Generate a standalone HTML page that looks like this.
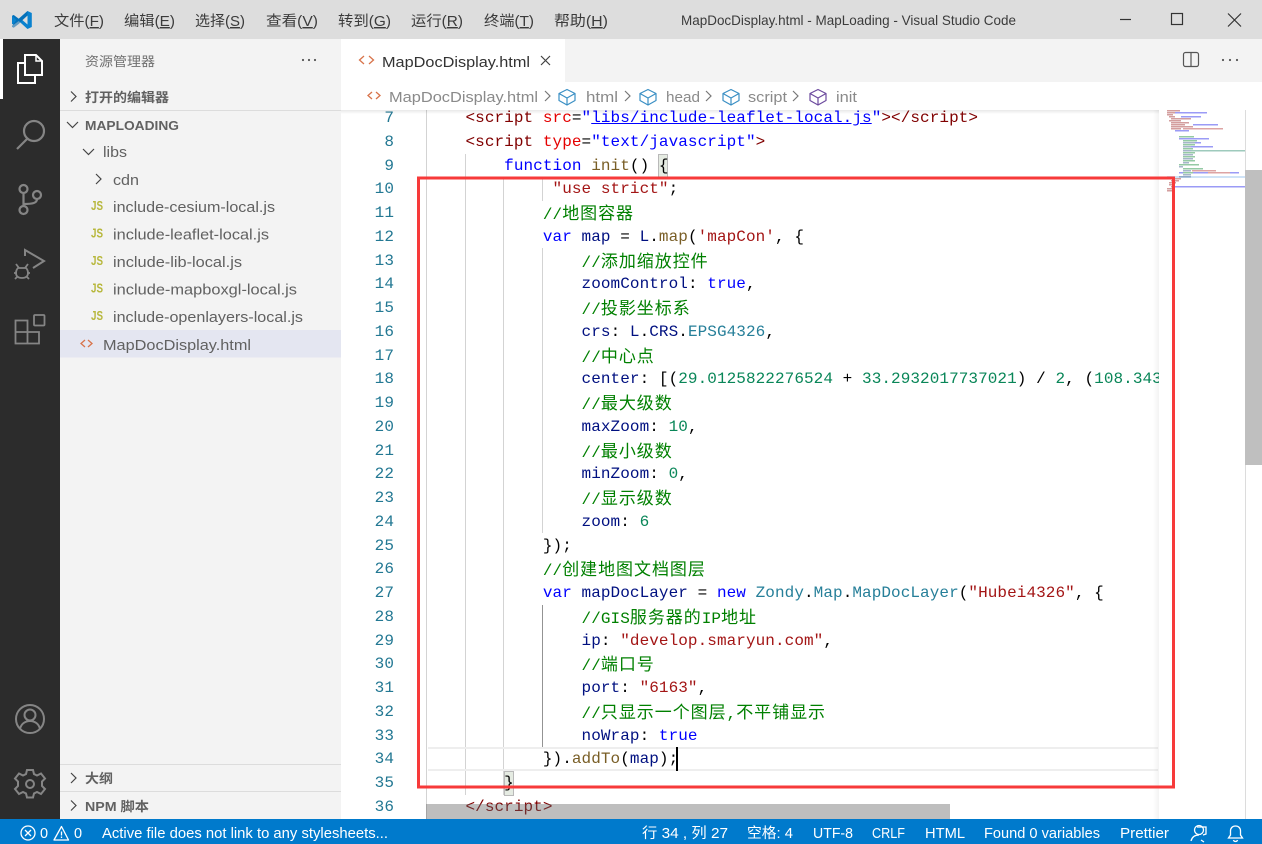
<!DOCTYPE html>
<html lang="zh">
<head>
<meta charset="utf-8">
<title>MapDocDisplay.html - MapLoading - Visual Studio Code</title>
<style>
html,body{margin:0;padding:0;width:1262px;height:844px;overflow:hidden;background:#fff}
#code,#nums{position:absolute;top:107.2px;font-family:"Liberation Mono","Noto Sans CJK SC",monospace;font-size:16px;letter-spacing:.07px;white-space:pre}
#nums{left:360px;width:34px;text-align:right;color:#237893;letter-spacing:.07px}
#code{left:426.8px;width:732px;overflow:hidden;color:#000}
#nums div,#code div{height:23.76px;line-height:23.76px}
i{font-style:normal}
.c{color:#008000}
.z{font-size:17px;letter-spacing:.95px;font-family:"Noto Sans CJK SC",sans-serif;line-height:20px}
.t{color:#800000}.a{color:#e50000}.s{color:#0000ff}.j{color:#a31515}.k{color:#0000ff}.f{color:#795e26}.v{color:#001080}.y{color:#267f99}.n{color:#098658}
.u{text-decoration:underline;color:#0000ff}
.b{position:absolute}
svg{position:absolute;left:0;top:0}
text{font-family:"Liberation Sans","Noto Sans CJK SC",sans-serif}
</style>
</head>
<body>
<!-- editor decorations -->
<div class="b" style="left:426px;top:110px;width:1px;height:709px;background:#d3d3d3"></div>
<div class="b" style="left:465px;top:154px;width:1px;height:641px;background:#d3d3d3"></div>
<div class="b" style="left:503px;top:177px;width:1px;height:618px;background:#d3d3d3"></div>
<div class="b" style="left:542px;top:177px;width:1px;height:24px;background:#d3d3d3"></div>
<div class="b" style="left:542px;top:248px;width:1px;height:285px;background:#d3d3d3"></div>
<div class="b" style="left:542px;top:605px;width:1px;height:142px;background:#939393"></div>
<div class="b" style="left:428px;top:747px;width:730px;height:20px;border-top:2px solid #eee;border-bottom:2px solid #eee"></div>
<div class="b" style="left:658px;top:154px;width:8px;height:22px;background:#e5ebe2;border:1px solid #b9b9b9"></div>
<div class="b" style="left:504px;top:771px;width:8px;height:23px;background:#e5ebe2;border:1px solid #b9b9b9"></div>

<div id="nums"><div>7</div><div>8</div><div>9</div><div>10</div><div>11</div><div>12</div><div>13</div><div>14</div><div>15</div><div>16</div><div>17</div><div>18</div><div>19</div><div>20</div><div>21</div><div>22</div><div>23</div><div>24</div><div>25</div><div>26</div><div>27</div><div>28</div><div>29</div><div>30</div><div>31</div><div>32</div><div>33</div><div>34</div><div>35</div><div>36</div></div>

<div id="code"><div>    <i class="t">&lt;script</i> <i class="a">src</i>=<i class="s">"</i><i class="u">libs/include-leaflet-local.js</i><i class="s">"</i><i class="t">&gt;&lt;/script&gt;</i></div><div>    <i class="t">&lt;script</i> <i class="a">type</i>=<i class="s">"text/javascript"</i><i class="t">&gt;</i></div><div>        <i class="k">function</i> <i class="f">init</i>() {</div><div>             <i class="j">"use strict"</i>;</div><div>            <i class="c">//<i class="z">地图容器</i></i></div><div>            <i class="k">var</i> <i class="v">map</i> = <i class="v">L</i>.<i class="f">map</i>(<i class="j">'mapCon'</i>, {</div><div>                <i class="c">//<i class="z">添加缩放控件</i></i></div><div>                <i class="v">zoomControl</i>: <i class="k">true</i>,</div><div>                <i class="c">//<i class="z">投影坐标系</i></i></div><div>                <i class="v">crs</i>: <i class="v">L</i>.<i class="v">CRS</i>.<i class="y">EPSG4326</i>,</div><div>                <i class="c">//<i class="z">中心点</i></i></div><div>                <i class="v">center</i>: [(<i class="n">29.0125822276524</i> + <i class="n">33.2932017737021</i>) / <i class="n">2</i>, (<i class="n">108.3434</i></div><div>                <i class="c">//<i class="z">最大级数</i></i></div><div>                <i class="v">maxZoom</i>: <i class="n">10</i>,</div><div>                <i class="c">//<i class="z">最小级数</i></i></div><div>                <i class="v">minZoom</i>: <i class="n">0</i>,</div><div>                <i class="c">//<i class="z">显示级数</i></i></div><div>                <i class="v">zoom</i>: <i class="n">6</i></div><div>            });</div><div>            <i class="c">//<i class="z">创建地图文档图层</i></i></div><div>            <i class="k">var</i> <i class="v">mapDocLayer</i> = <i class="k">new</i> <i class="y">Zondy</i>.<i class="y">Map</i>.<i class="y">MapDocLayer</i>(<i class="j">"Hubei4326"</i>, {</div><div>                <i class="c">//GIS<i class="z">服务器的</i>IP<i class="z">地址</i></i></div><div>                <i class="v">ip</i>: <i class="j">"develop.smaryun.com"</i>,</div><div>                <i class="c">//<i class="z">端口号</i></i></div><div>                <i class="v">port</i>: <i class="j">"6163"</i>,</div><div>                <i class="c">//<i class="z">只显示一个图层</i>,<i class="z">不平铺显示</i></i></div><div>                <i class="v">noWrap</i>: <i class="k">true</i></div><div>            }).<i class="f">addTo</i>(<i class="v">map</i>);</div><div>        }</div><div>    <i class="t">&lt;/script&gt;</i></div></div>

<div class="b" style="left:676px;top:747px;width:2px;height:24px;background:#000"></div>
<div class="b" style="left:426px;top:804px;width:524px;height:15px;background:rgba(100,100,100,.42)"></div>

<svg width="1262" height="844" viewBox="0 0 1262 844" xmlns="http://www.w3.org/2000/svg">
<defs>
<linearGradient id="sh" x1="0" x2="0" y1="0" y2="1"><stop offset="0" stop-color="#000" stop-opacity=".09"/><stop offset="1" stop-color="#000" stop-opacity="0"/></linearGradient>
<linearGradient id="sr" x1="0" x2="1" y1="0" y2="0"><stop offset="0" stop-color="#000" stop-opacity="0"/><stop offset="1" stop-color="#000" stop-opacity=".05"/></linearGradient>
<g id="cube" fill="none" stroke-width="1.2" stroke-linejoin="round"><path d="M1 5.500 9 1.500l8 4v7l-8 4.500-8-4.500z"/><path d="M1 5.500 9 10l8-4.500M9 10v7"/></g>
<path id="chev" d="M0 0l5 5-5 5" fill="none" stroke-width="1.2"/>
<path id="chevd" d="M0 0l5.500 5.500L11 0" fill="none" stroke-width="1.2"/>
</defs>

<!-- title bar -->
<rect width="1262" height="39" fill="#dddddd"/>
<path d="M27.500 11 31.800 13v14l-4.300 2-8.800-8-5 3.800-1.700-.9v-8l1.700-.9 5 3.800zM27.500 15.500l-5.200 4.500 5.200 4.500z" fill="#0a82cf" fill-rule="evenodd"/>
<path d="M12 15.800 13.700 15l5 3.800L27.500 11v4.500L18.700 24l-5 3.800-1.700-.9v-1l4.300-5.900z" fill="#0065a9" opacity=".55"/>
<g fill="#3b3b3b" font-size="14.500">
<text x="54" y="26" textLength="50" lengthAdjust="spacingAndGlyphs">文件(<tspan text-decoration="underline">F</tspan>)</text>
<text x="124" y="26" textLength="51" lengthAdjust="spacingAndGlyphs">编辑(<tspan text-decoration="underline">E</tspan>)</text>
<text x="195" y="26" textLength="50" lengthAdjust="spacingAndGlyphs">选择(<tspan text-decoration="underline">S</tspan>)</text>
<text x="266" y="26" textLength="52" lengthAdjust="spacingAndGlyphs">查看(<tspan text-decoration="underline">V</tspan>)</text>
<text x="338" y="26" textLength="53" lengthAdjust="spacingAndGlyphs">转到(<tspan text-decoration="underline">G</tspan>)</text>
<text x="411" y="26" textLength="52" lengthAdjust="spacingAndGlyphs">运行(<tspan text-decoration="underline">R</tspan>)</text>
<text x="484" y="26" textLength="50" lengthAdjust="spacingAndGlyphs">终端(<tspan text-decoration="underline">T</tspan>)</text>
<text x="554" y="26" textLength="54" lengthAdjust="spacingAndGlyphs">帮助(<tspan text-decoration="underline">H</tspan>)</text>
<text x="681" y="25" font-size="14" textLength="335" lengthAdjust="spacingAndGlyphs">MapDocDisplay.html - MapLoading - Visual Studio Code</text>
</g>
<g fill="none" stroke="#333" stroke-width="1.200">
<path d="M1120 19.500h11"/>
<rect x="1171.500" y="13.500" width="11" height="11"/>
<path d="M1228 13.500l13 13M1241 13.500l-13 13"/>
</g>

<!-- activity bar -->
<rect y="39" width="60" height="780" fill="#2c2c2c"/>
<rect y="39" width="3" height="60" fill="#fff"/>
<g fill="none" stroke="#fff" stroke-width="2">
<path d="M25 55h11l6 6v14H25z" fill="#2c2c2c"/>
<path d="M36 55v6h6" stroke-width="1.500"/>
<path d="M25 63h-7v20h17v-8"/>
</g>
<g fill="none" stroke="#858585" stroke-width="2.200">
<circle cx="34" cy="131" r="10"/><path d="M27 139l-10 10"/>
<circle cx="23.500" cy="189" r="4"/><circle cx="23.500" cy="210" r="4"/><circle cx="37" cy="195" r="4"/>
<path d="M23.500 193v13M37 199c0 4-4 5-13.500 5"/>
<path d="M25 256v-6l19 11-11 7" stroke-width="2"/>
<path d="M18 268h8c1 1 2 3 2 5 0 3-2 5-6 5s-6-2-6-5c0-2 1-4 2-5zM16 264l3 4M28 264l-3 4M14 273h3M30 273h-3M15 279l3-3M29 279l-3-3" stroke-width="1.800"/>
<path d="M15.500 320.500h12v23h-12zM15.500 332h23.500v11.500h-11.500" stroke-width="1.800"/>
<rect x="34" y="315" width="10.500" height="10.500" rx="1" stroke-width="1.800"/>
<circle cx="30" cy="719" r="14" stroke-width="2"/><circle cx="30" cy="715" r="5.500" stroke-width="2"/><path d="M20 729c1-5 5-8 10-8s9 3 10 8" stroke-width="2"/>
<circle cx="30" cy="784" r="4" stroke-width="2"/>
<path d="M27 770h6l1 4 3 1.500 4-2 4 5-3 3v4.500l3 3-4 5-4-2-3 1.500-1 4h-6l-1-4-3-1.500-4 2-4-5 3-3v-4.500l-3-3 4-5 4 2 3-1.500z" stroke-width="2"/>
</g>

<!-- sidebar -->
<rect x="60" y="39" width="281" height="780" fill="#f3f3f3"/>
<text x="85" y="66" font-size="13" fill="#6f6f6f" textLength="70" lengthAdjust="spacingAndGlyphs">资源管理器</text>
<g fill="#555"><circle cx="303" cy="60" r="1.100"/><circle cx="309" cy="60" r="1.100"/><circle cx="315" cy="60" r="1.100"/></g>
<use href="#chev" x="71" y="91.500" stroke="#444"/>
<text x="85" y="102" font-size="13" font-weight="700" fill="#616161" textLength="84" lengthAdjust="spacingAndGlyphs">打开的编辑器</text>
<rect x="60" y="110" width="281" height="1" fill="#dcdcdc"/>
<use href="#chevd" x="67" y="122" stroke="#444"/>
<text x="85" y="130" font-size="13" font-weight="700" fill="#616161" textLength="94" lengthAdjust="spacingAndGlyphs">MAPLOADING</text>
<use href="#chevd" x="83" y="149" stroke="#444"/>
<text x="103" y="157" font-size="14.500" fill="#616161" textLength="24" lengthAdjust="spacingAndGlyphs">libs</text>
<use href="#chev" x="96" y="174" stroke="#444"/>
<text x="113" y="185" font-size="14.500" fill="#616161" textLength="26" lengthAdjust="spacingAndGlyphs">cdn</text>
<g fill="#b7b73b" font-size="12.500" font-weight="700">
<text x="91" y="210" textLength="12" lengthAdjust="spacingAndGlyphs">JS</text>
<text x="91" y="237.500" textLength="12" lengthAdjust="spacingAndGlyphs">JS</text>
<text x="91" y="265" textLength="12" lengthAdjust="spacingAndGlyphs">JS</text>
<text x="91" y="292.500" textLength="12" lengthAdjust="spacingAndGlyphs">JS</text>
<text x="91" y="320" textLength="12" lengthAdjust="spacingAndGlyphs">JS</text>
</g>
<g font-size="14.500" fill="#616161">
<text x="113" y="212" textLength="162" lengthAdjust="spacingAndGlyphs">include-cesium-local.js</text>
<text x="113" y="239.500" textLength="156" lengthAdjust="spacingAndGlyphs">include-leaflet-local.js</text>
<text x="113" y="267" textLength="129" lengthAdjust="spacingAndGlyphs">include-lib-local.js</text>
<text x="113" y="294.500" textLength="184" lengthAdjust="spacingAndGlyphs">include-mapboxgl-local.js</text>
<text x="113" y="322" textLength="190" lengthAdjust="spacingAndGlyphs">include-openlayers-local.js</text>
</g>
<rect x="60" y="330" width="281" height="27.500" fill="#e4e6f1"/>
<path d="M85 340l-4 3.500 4 3.500M88 340l4 3.500-4 3.500" fill="none" stroke="#d8734a" stroke-width="1.300"/>
<text x="103" y="350" font-size="14.500" fill="#616161" textLength="148" lengthAdjust="spacingAndGlyphs">MapDocDisplay.html</text>
<rect x="60" y="764" width="281" height="1" fill="#dcdcdc"/>
<use href="#chev" x="71" y="773" stroke="#444"/>
<text x="85" y="783" font-size="13" font-weight="700" fill="#616161" textLength="28" lengthAdjust="spacingAndGlyphs">大纲</text>
<rect x="60" y="791" width="281" height="1" fill="#dcdcdc"/>
<use href="#chev" x="71" y="800.500" stroke="#444"/>
<text x="85" y="811" font-size="13" font-weight="700" fill="#616161" textLength="64" lengthAdjust="spacingAndGlyphs">NPM 脚本</text>

<!-- tabs -->
<rect x="341" y="39" width="921" height="43" fill="#f3f3f3"/>
<rect x="341" y="39" width="224" height="45" fill="#fff"/>
<rect x="341" y="82" width="921" height="28" fill="#fff"/>
<path d="M364 56l-4.500 4 4.500 4M369 56l4.500 4-4.500 4" fill="none" stroke="#d8734a" stroke-width="1.300"/>
<text x="382" y="67" font-size="14.500" fill="#333" textLength="148" lengthAdjust="spacingAndGlyphs">MapDocDisplay.html</text>
<path d="M541 56l9 9M550 56l-9 9" stroke="#424242" stroke-width="1.200"/>
<rect x="1183.500" y="52.500" width="15" height="14" rx="2" fill="none" stroke="#555" stroke-width="1.200"/><path d="M1191 52v15" stroke="#555" stroke-width="1.200"/>
<g fill="#555"><circle cx="1223" cy="60" r="1.100"/><circle cx="1230" cy="60" r="1.100"/><circle cx="1237" cy="60" r="1.100"/></g>

<!-- breadcrumbs -->
<path d="M372 92l-4 3.500 4 3.500M376 92l4 3.500-4 3.500" fill="none" stroke="#d8734a" stroke-width="1.300"/>
<g font-size="14.500" fill="#8a8a8a">
<text x="389" y="102" textLength="149" lengthAdjust="spacingAndGlyphs">MapDocDisplay.html</text>
<text x="586" y="102" textLength="32" lengthAdjust="spacingAndGlyphs">html</text>
<text x="666" y="102" textLength="34" lengthAdjust="spacingAndGlyphs">head</text>
<text x="748" y="102" textLength="39" lengthAdjust="spacingAndGlyphs">script</text>
<text x="836" y="102" textLength="21" lengthAdjust="spacingAndGlyphs">init</text>
</g>
<g stroke="#777"><use href="#chev" x="545" y="91"/><use href="#chev" x="625" y="91"/><use href="#chev" x="706" y="91"/><use href="#chev" x="793" y="91"/></g>
<use href="#cube" x="558" y="88" stroke="#3a8fc4"/>
<use href="#cube" x="639" y="88" stroke="#3a8fc4"/>
<use href="#cube" x="722" y="88" stroke="#3a8fc4"/>
<use href="#cube" x="809" y="88" stroke="#6c4a9e"/>
<rect x="341" y="110" width="905" height="4" fill="url(#sh)"/>

<!-- minimap -->
<rect x="1159" y="110" width="86" height="709" fill="#fff"/>
<rect x="1153" y="110" width="6" height="709" fill="url(#sr)"/>
<rect x="1245" y="110" width="1" height="709" fill="#dcdcdc"/>
<rect x="1245" y="170" width="17" height="295" fill="#bfbfbf"/>
<rect x="1167" y="176" width="78" height="2" fill="#cfe3f7"/>
<g opacity=".55">
<g fill="#b05050">
<rect x="1167" y="110" width="13" height="1.500"/><rect x="1167" y="112" width="8" height="1.500"/><rect x="1167" y="114" width="6" height="1.500"/><rect x="1169" y="116" width="6" height="1.500"/>
<rect x="1171" y="118" width="20" height="1.500"/><rect x="1169" y="120" width="12" height="1.500"/><rect x="1171" y="122" width="18" height="1.500"/><rect x="1171" y="124" width="14" height="1.500"/>
<rect x="1171" y="126" width="22" height="1.500"/><rect x="1171" y="128" width="10" height="1.500"/><rect x="1175" y="178" width="6" height="1.500"/><rect x="1171" y="180" width="8" height="1.500"/>
<rect x="1169" y="182" width="7" height="1.500"/><rect x="1169" y="184" width="5" height="1.500"/><rect x="1171" y="186" width="8" height="1.500"/><rect x="1167" y="188" width="7" height="1.500"/><rect x="1167" y="190" width="7" height="1.500"/>
<rect x="1183" y="128" width="40" height="1.500" fill="#c35a5a"/>
</g>
<g fill="#4a4af0">
<rect x="1175" y="112" width="32" height="1.500"/><rect x="1181" y="116" width="20" height="1.500"/><rect x="1193" y="124" width="25" height="1.500"/><rect x="1175" y="130" width="14" height="1.500"/>
<rect x="1179" y="138" width="30" height="1.500"/><rect x="1191" y="142" width="10" height="1.500"/><rect x="1183" y="146" width="30" height="1.500"/>
<rect x="1179" y="172" width="60" height="1.500"/><rect x="1175" y="186" width="70" height="1.500"/>
</g>
<g fill="#3f9f5a">
<rect x="1179" y="136" width="15" height="1.500"/><rect x="1183" y="140" width="14" height="1.500"/><rect x="1183" y="144" width="12" height="1.500"/><rect x="1183" y="148" width="10" height="1.500"/>
<rect x="1183" y="152" width="12" height="1.500"/><rect x="1183" y="156" width="12" height="1.500"/><rect x="1183" y="160" width="12" height="1.500"/><rect x="1179" y="164" width="20" height="1.500"/>
<rect x="1183" y="168" width="20" height="1.500"/><rect x="1183" y="172" width="10" height="1.500"/>
<rect x="1190" y="150" width="55" height="1.500" fill="#4f9f86"/>
</g>
<g fill="#5e7aa0">
<rect x="1183" y="142" width="12" height="1.500"/><rect x="1183" y="146" width="8" height="1.500"/><rect x="1183" y="150" width="8" height="1.500"/><rect x="1183" y="154" width="10" height="1.500"/><rect x="1183" y="158" width="10" height="1.500"/><rect x="1183" y="162" width="6" height="1.500"/><rect x="1179" y="166" width="4" height="1.500"/>
<rect x="1183" y="174" width="8" height="1.500"/><rect x="1183" y="170" width="8" height="1.500"/><rect x="1179" y="176" width="12" height="1.500"/>
</g>
<rect x="1208" y="172" width="22" height="1.500" fill="#c35a5a"/><rect x="1192" y="170" width="24" height="1.500" fill="#c35a5a"/>
</g>

<!-- red frame -->
<rect x="418.500" y="178" width="755" height="609" fill="none" stroke="#f73a3a" stroke-width="3"/>

<!-- status bar -->
<rect y="819" width="1262" height="25" fill="#007acc"/>
<g fill="none" stroke="#fff" stroke-width="1.300">
<circle cx="28" cy="833" r="7"/><path d="M25 830l6 6M31 830l-6 6"/>
<path d="M61.500 826.500l7 13.500h-14.500z" stroke-linejoin="round"/><path d="M61.500 831.500v4M61.500 836.500v1.500"/>
<circle cx="1199" cy="830" r="4.500"/><path d="M1191 841c1-4 4-6 8-6M1203 835l3-1v-7h-9M1201 840l3 2"/>
<path d="M1235.500 826c3 0 5 2 5 5v4l2 3h-14l2-3v-4c0-3 2-5 5-5zM1233.500 840c.5 2 3.500 2 4 0"/>
</g>
<g fill="#fff" font-size="14.500">
<text x="40" y="838" textLength="8">0</text>
<text x="74" y="838" textLength="8">0</text>
<text x="102" y="838" textLength="286" lengthAdjust="spacingAndGlyphs">Active file does not link to any stylesheets...</text>
<text x="642" y="838" textLength="86" lengthAdjust="spacingAndGlyphs">行 34 , 列 27</text>
<text x="747" y="838" textLength="46" lengthAdjust="spacingAndGlyphs">空格: 4</text>
<text x="813" y="838" textLength="40" lengthAdjust="spacingAndGlyphs">UTF-8</text>
<text x="872" y="838" textLength="33" lengthAdjust="spacingAndGlyphs">CRLF</text>
<text x="925" y="838" textLength="40" lengthAdjust="spacingAndGlyphs">HTML</text>
<text x="984" y="838" textLength="116" lengthAdjust="spacingAndGlyphs">Found 0 variables</text>
<text x="1120" y="838" textLength="49" lengthAdjust="spacingAndGlyphs">Prettier</text>
</g>
</svg>
</body>
</html>
